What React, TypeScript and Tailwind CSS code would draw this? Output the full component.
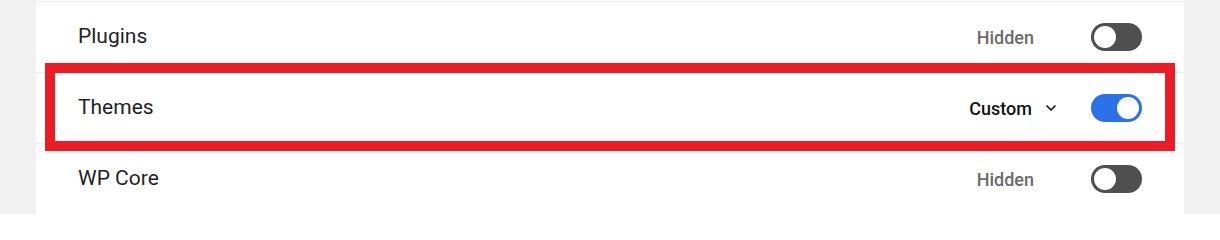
import { ChevronDown } from 'lucide-react';

type Row = {
  label: string;
  value: string;
  enabled: boolean;
};

const rows: Row[] = [
  { label: 'Plugins', value: 'Hidden', enabled: false },
  { label: 'Themes', value: 'Custom', enabled: true },
  { label: 'WP Core', value: 'Hidden', enabled: false },
];

function Toggle({ on }: { on: boolean }) {
  return (
    <span
      className={
        on
          ? 'flex h-[28px] w-[51px] items-center justify-end rounded-full bg-[#2b72e9] px-[3px]'
          : 'flex h-[28px] w-[51px] items-center justify-start rounded-full bg-[#4f4f4f] px-[3px]'
      }
    >
      <span className="h-[22px] w-[22px] rounded-full bg-white" />
    </span>
  );
}

function SettingRow({ row }: { row: Row }) {
  return (
    <div className="flex h-[71px] items-center justify-between border-t border-[#ececec] px-[42px]">
      <span className="text-[21px] text-[#1e2327]">{row.label}</span>
      <div className="flex items-center">
        {row.enabled ? (
          <span className="mr-[32px] flex items-center gap-[11px] text-[18px] font-medium text-[#111]">
            {row.value}
            <ChevronDown className="h-[16px] w-[16px]" strokeWidth={2.5} aria-hidden="true" />
          </span>
        ) : (
          <span className="mr-[57px] text-[18px] font-medium text-[#6b6b6b]">{row.value}</span>
        )}
        <Toggle on={row.enabled} />
      </div>
    </div>
  );
}

export default function App() {
  return (
    <div
      className="h-[214px] w-[1220px] overflow-hidden bg-[#f1f1f1] px-[36px]"
      style={{ fontFamily: 'Roboto, "Liberation Sans", sans-serif' }}
    >
      <div className="relative h-full bg-white pt-px">
        {rows.map((row) => (
          <SettingRow key={row.label} row={row} />
        ))}
        {/* highlight annotation */}
        <div className="pointer-events-none absolute left-[9px] top-[63px] h-[88px] w-[1130px] border-[10px] border-[#ed1c24]" />
      </div>
    </div>
  );
}
